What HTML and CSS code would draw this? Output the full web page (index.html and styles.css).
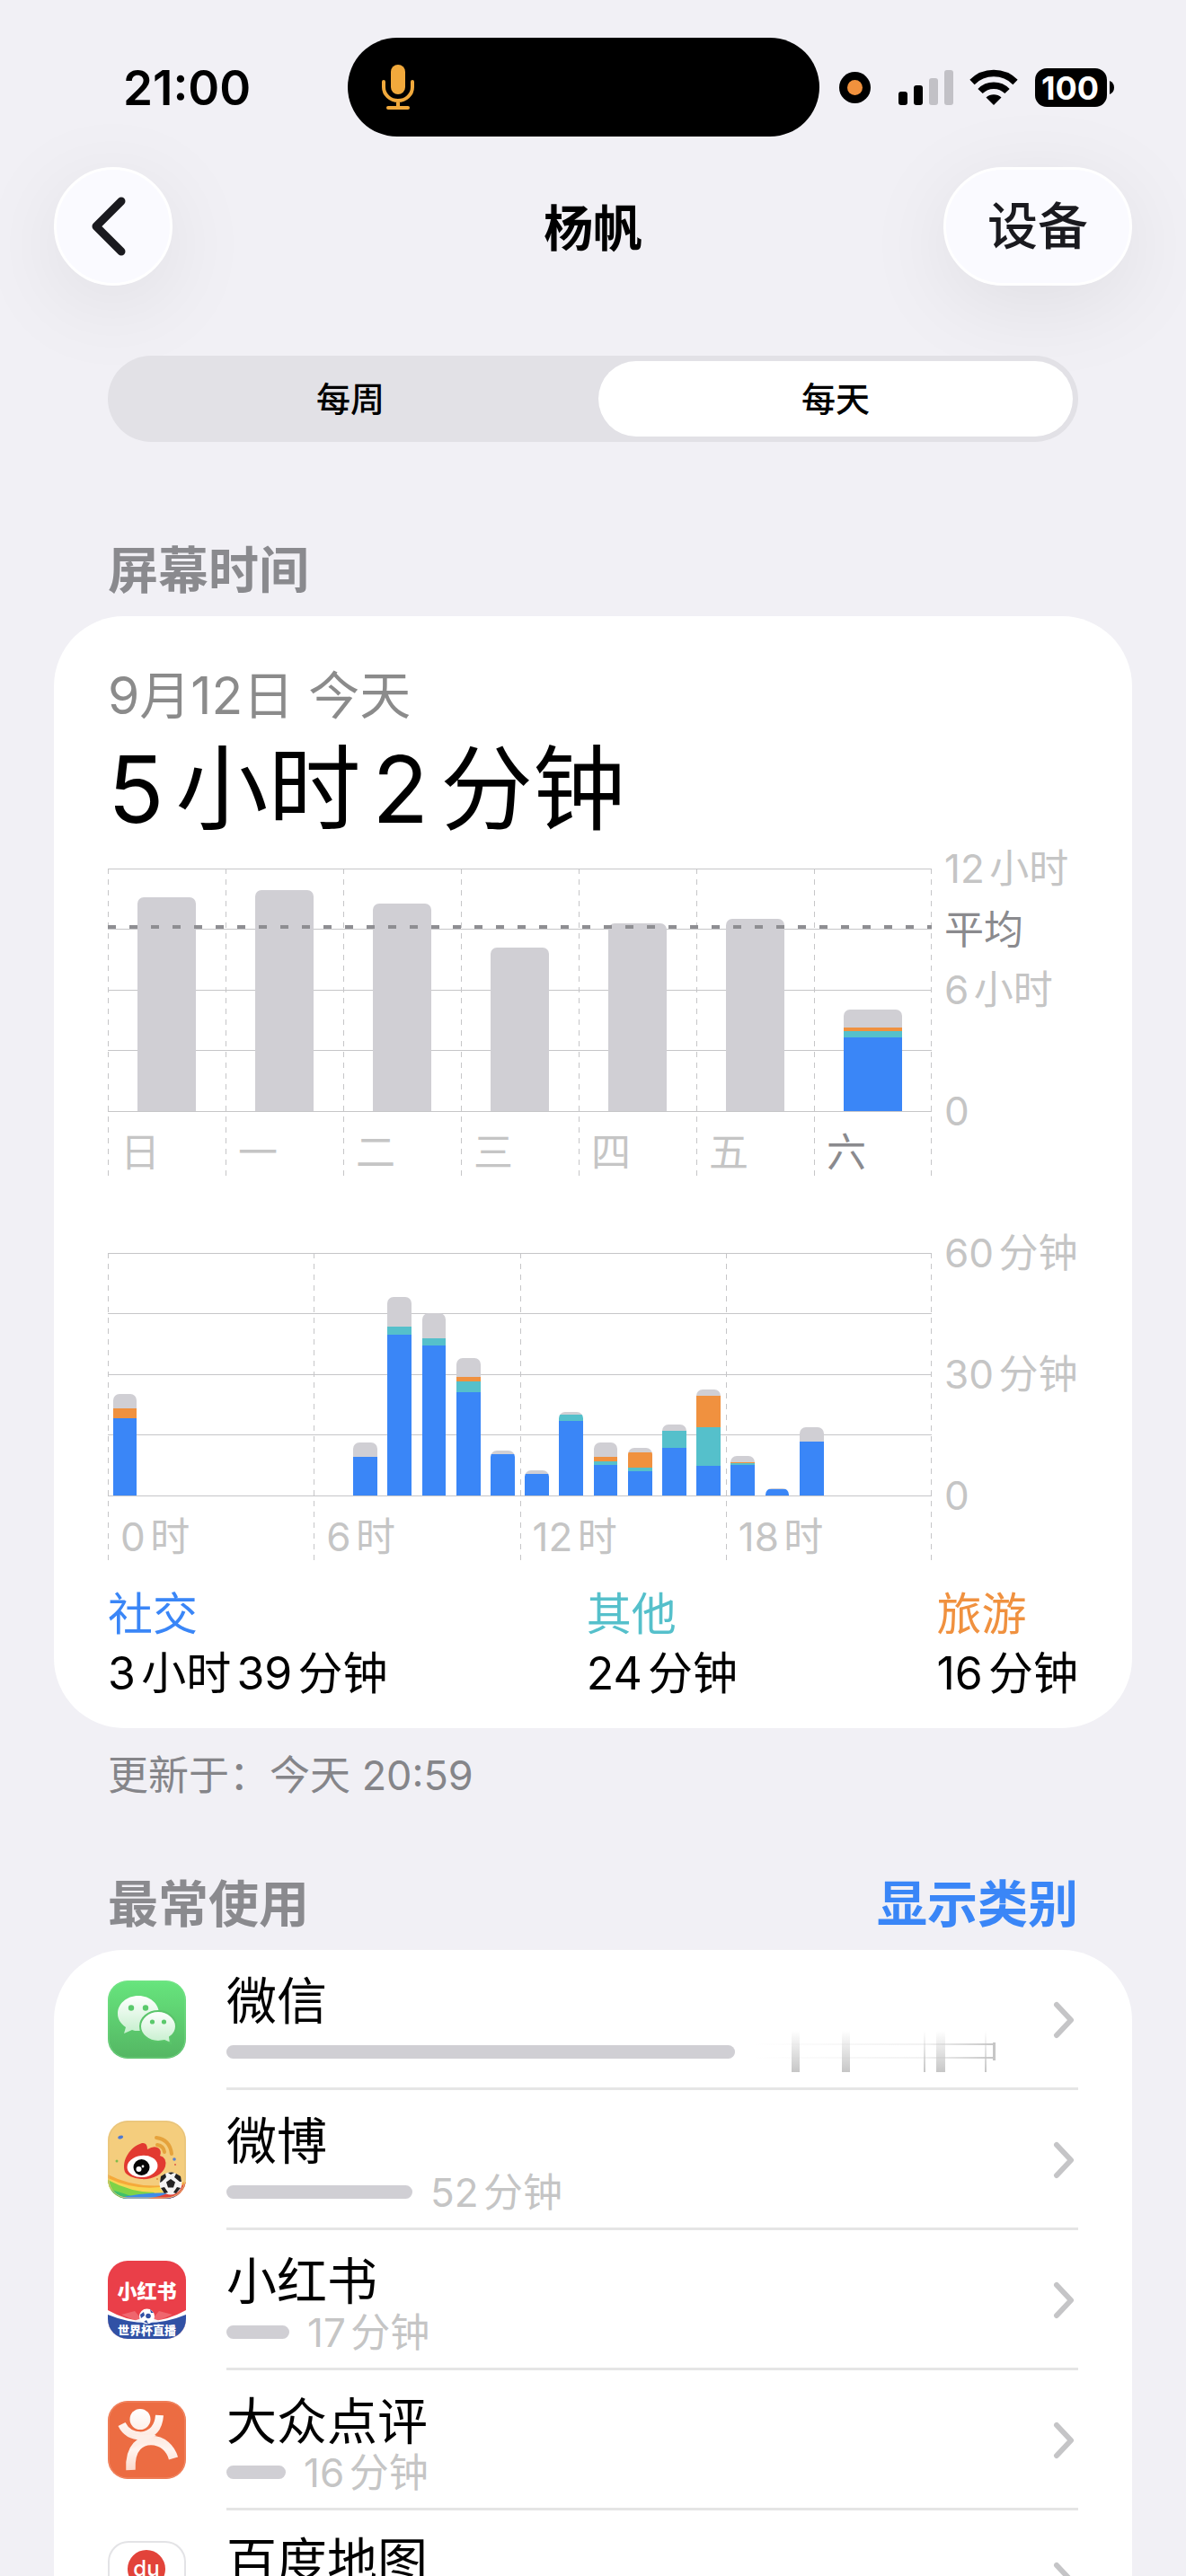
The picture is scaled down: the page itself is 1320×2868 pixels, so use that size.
FILE: index.html
```html
<!DOCTYPE html>
<html lang="zh-CN">
<head>
<meta charset="utf-8">
<meta name="viewport" content="width=device-width, initial-scale=1">
<title>屏幕时间</title>
<link rel="stylesheet" href="styles.css">
</head>
<body>
<div class="app">
  <div class="status">
    <div class="status-time">21:00</div>
    <div class="island">
      <svg width="36" height="50" viewBox="0 0 36 50" aria-hidden="true"><rect x="10" y="0" width="16" height="33" rx="8" fill="#f1a93c"/><path d="M2 19v6a16 15 0 0 0 32 0v-6M18 40v8M7 48h22" fill="none" stroke="#f1a93c" stroke-width="4" stroke-linecap="round"/></svg>
    </div>
    <div class="status-icons">
      <svg width="35" height="35" viewBox="0 0 35 35" aria-hidden="true"><circle cx="17.500" cy="17.500" r="17.500"/><circle cx="17.500" cy="17.500" r="8.500" fill="#f0913d"/></svg>
      <svg class="signal" width="61" height="39" viewBox="0 0 61 39" aria-hidden="true"><rect y="24" width="10" height="15" rx="3"/><rect x="17" y="17" width="10" height="22" rx="3"/><g fill="#c2c1c6"><rect x="34" y="9" width="10" height="30" rx="3"/><rect x="51" width="10" height="39" rx="3"/></g></svg>
      <svg class="wifi" width="54" height="40" viewBox="0 0 54 40" aria-hidden="true"><path d="M3 14.500a34 34 0 0 1 48 0M12 24.500a21 21 0 0 1 30 0" fill="none" stroke="#000" stroke-width="7.500"/><path d="M18.500 31.500a13 13 0 0 1 17 0L27 40z"/></svg>
      <svg class="battery" width="89" height="43" viewBox="0 0 89 43" role="img" aria-label="电量 100"><rect width="80" height="43" rx="13"/><path d="M83 14q5 2 5 7.500t-5 7.500z"/><text x="39" y="35" text-anchor="middle">100</text></svg>
    </div>
  </div>

  <header class="nav">
    <button class="glass back" aria-label="返回"><svg width="40" height="66" viewBox="0 0 40 66" aria-hidden="true"><path d="M34 5 6 33 34 61" fill="none" stroke="#1a1a1f" stroke-width="9" stroke-linecap="round" stroke-linejoin="round"/></svg></button>
    <h1>杨帆</h1>
    <button class="glass devices">设备</button>
  </header>

  <div class="segmented" role="radiogroup" aria-label="时间范围">
    <input type="radio" name="range" id="weekly"><label for="weekly">每周</label>
    <input type="radio" name="range" id="daily" checked><label for="daily">每天</label>
  </div>

  <main>
    <div class="section-head first"><h2>屏幕时间</h2></div>
    <section class="card summary">
      <p class="date">9月12日 今天</p>
      <p class="total">5小时2分钟</p>

      <div class="chart week">
        <div class="plot">
          <div class="span"><div class="bars"><div class="stack"><i class="rest" style="height:238px"></i></div></div><span class="tick">日</span></div>
          <div class="span"><div class="bars"><div class="stack"><i class="rest" style="height:246px"></i></div></div><span class="tick">一</span></div>
          <div class="span"><div class="bars"><div class="stack"><i class="rest" style="height:231px"></i></div></div><span class="tick">二</span></div>
          <div class="span"><div class="bars"><div class="stack"><i class="rest" style="height:182px"></i></div></div><span class="tick">三</span></div>
          <div class="span"><div class="bars"><div class="stack"><i class="rest" style="height:209px"></i></div></div><span class="tick">四</span></div>
          <div class="span"><div class="bars"><div class="stack"><i class="rest" style="height:214px"></i></div></div><span class="tick">五</span></div>
          <div class="span"><div class="bars"><div class="stack"><i class="rest" style="height:20px"></i><i class="travel" style="height:4px"></i><i class="other" style="height:7px"></i><i class="social" style="height:82px"></i></div></div><span class="tick today">六</span></div>
        </div>
        <div class="axis"><span class="row-1">12小时</span><span class="row-2 average">平均</span><span class="row-3">6小时</span><span class="row-5">0</span></div>
      </div>

      <div class="chart day">
        <div class="plot">
          <div class="span"><div class="bars">
            <div class="stack"><i class="rest" style="height:16px"></i><i class="travel" style="height:11px"></i><i class="social" style="height:86px"></i></div>
          </div><span class="tick">0时</span></div>
          <div class="span"><div class="bars">
            <div class="stack"></div>
            <div class="stack"><i class="rest" style="height:16px"></i><i class="social" style="height:43px"></i></div>
            <div class="stack"><i class="rest" style="height:33px"></i><i class="other" style="height:9px"></i><i class="social" style="height:179px"></i></div>
            <div class="stack"><i class="rest" style="height:28px"></i><i class="other" style="height:8px"></i><i class="social" style="height:167px"></i></div>
            <div class="stack"><i class="rest" style="height:21px"></i><i class="travel" style="height:5px"></i><i class="other" style="height:12px"></i><i class="social" style="height:115px"></i></div>
            <div class="stack"><i class="rest" style="height:4px"></i><i class="social" style="height:46px"></i></div>
          </div><span class="tick">6时</span></div>
          <div class="span"><div class="bars">
            <div class="stack"><i class="rest" style="height:4px"></i><i class="social" style="height:24px"></i></div>
            <div class="stack"><i class="rest" style="height:3px"></i><i class="other" style="height:7px"></i><i class="social" style="height:83px"></i></div>
            <div class="stack"><i class="rest" style="height:16px"></i><i class="travel" style="height:5px"></i><i class="other" style="height:4px"></i><i class="social" style="height:34px"></i></div>
            <div class="stack"><i class="rest" style="height:5px"></i><i class="travel" style="height:17px"></i><i class="other" style="height:4px"></i><i class="social" style="height:27px"></i></div>
            <div class="stack"><i class="rest" style="height:7px"></i><i class="other" style="height:19px"></i><i class="social" style="height:53px"></i></div>
            <div class="stack"><i class="rest" style="height:7px"></i><i class="travel" style="height:35px"></i><i class="other" style="height:43px"></i><i class="social" style="height:33px"></i></div>
          </div><span class="tick">12时</span></div>
          <div class="span"><div class="bars">
            <div class="stack"><i class="rest" style="height:7px"></i><i class="travel" style="height:1px"></i><i class="other" style="height:2px"></i><i class="social" style="height:34px"></i></div>
            <div class="stack"><i class="rest" style="height:1px"></i><i class="social" style="height:7px"></i></div>
            <div class="stack"><i class="rest" style="height:16px"></i><i class="social" style="height:60px"></i></div>
          </div><span class="tick">18时</span></div>
        </div>
        <div class="axis"><span class="row-1">60分钟</span><span class="row-3">30分钟</span><span class="row-5">0</span></div>
      </div>

      <dl class="legend">
        <div><dt class="c-social">社交</dt><dd>3小时39分钟</dd></div>
        <div><dt class="c-other">其他</dt><dd>24分钟</dd></div>
        <div><dt class="c-travel">旅游</dt><dd>16分钟</dd></div>
      </dl>
    </section>
    <p class="updated">更新于：今天 20:59</p>

    <div class="section-head"><h2>最常使用</h2><button class="text-button">显示类别</button></div>
    <section class="card apps">
      <a class="app-row" href="#wechat">
        <svg class="app-icon" viewBox="0 0 87 87" aria-hidden="true">
          <defs><linearGradient id="wx" x2="0" y2="1"><stop stop-color="#67e57d"/><stop offset="1" stop-color="#54b663"/></linearGradient><linearGradient id="wb" x2="0" y2="1"><stop stop-color="#fff"/><stop offset="1" stop-color="#c5efcd"/></linearGradient></defs>
          <rect width="87" height="87" rx="22" fill="url(#wx)"/><rect x="1" y="1" width="85" height="85" rx="21" fill="none" stroke="#7fe391" stroke-opacity=".6"/>
          <path d="M34 17c13 0 23 9 23 20S47 56 34 56c-3 0-5 0-7-1l-9 4 2-7c-6-4-9-9-9-15 0-11 10-20 23-20z" fill="url(#wb)"/><g fill="#5bc96c"><circle cx="26" cy="30.500" r="3.200"/><circle cx="42" cy="30.500" r="3.200"/></g>
          <path d="M56 34c11 0 20 8 20 17 0 5-2 9-7 12l1 7-7-3-7 1c-11 0-20-8-20-17s9-17 20-17z" fill="url(#wb)" stroke="#5bc56b" stroke-width="2"/><g fill="#5bc96c"><circle cx="49.500" cy="46" r="2.600"/><circle cx="62.500" cy="46" r="2.600"/></g>
        </svg>
        <span class="app-body"><span class="app-name">微信</span><span class="usage"><span class="meter" style="width:566px"></span>
          <svg class="fading-time" width="280" height="46" viewBox="0 0 280 46" aria-hidden="true">
            <defs><linearGradient id="fv" x2="0" y2="1"><stop stop-color="#c6c6c6" stop-opacity="0"/><stop offset="1" stop-color="#c6c6c6"/></linearGradient><linearGradient id="fh" gradientUnits="userSpaceOnUse" x1="0" x2="272" y1="0" y2="0"><stop stop-color="#ccc" stop-opacity="0"/><stop offset=".7" stop-color="#ccc" stop-opacity=".25"/><stop offset="1" stop-color="#c4c4c4"/></linearGradient></defs>
            <path d="M43 0h9v46h-9zM99 0h9v46h-9zM190 0h2v46h-2zM204 0h10v46h-10zM258 0h2v46h-2z" fill="url(#fv)"/><path d="M0 14h270v2H0zM0 29h270v2H0z" fill="url(#fh)"/><path d="M267 13h3v20h-3z" fill="#c6c6c6"/>
          </svg></span></span>
        <svg class="chevron" width="24" height="42" viewBox="0 0 24 42" aria-hidden="true"><path d="M4 4 20 21 4 38"/></svg>
      </a>
      <a class="app-row" href="#weibo">
        <svg class="app-icon" viewBox="0 0 87 87" aria-hidden="true">
          <defs><clipPath id="ic"><rect width="87" height="87" rx="22"/></clipPath></defs>
          <g clip-path="url(#ic)"><rect width="87" height="87" fill="#f4cd7d"/>
          <path d="M0 60q38 20 87 8v19H0z" fill="#f5a93a"/><path d="M0 64q34 16 70 8l-8 15H0z" fill="#f7d654"/><path d="M0 66q26 14 52 14l-4 7H0z" fill="#7ed348"/><path d="M0 76q16 4 34 11H0z" fill="#3fc06b"/><path d="M10 87q30-9 77-6v6z" fill="#3f8be8"/><path d="M44 87q26-4 43-18v18z" fill="#e0453a"/><path d="M60 87q18-1 27-9v9z" fill="#2b4fc0"/></g>
          <path d="M54 19q15 2 17 18" fill="none" stroke="#e5a23c" stroke-width="4" stroke-linecap="round"/><path d="M55 27q7 1 8 8" fill="none" stroke="#e5a23c" stroke-width="4" stroke-linecap="round"/>
          <path d="M19 57C15 44 25 29 38 25q6-1 6 7 8-5 13-1 3 3 1 8 8 2 6 12C61 61 48 66 37 65 28 64 21 61 19 57z" fill="#e23a31"/><ellipse cx="38.500" cy="51" rx="17" ry="12" fill="#fff" transform="rotate(-6 38 51)"/><circle cx="37.500" cy="52" r="9" fill="#050505"/><circle cx="34.500" cy="54" r="3" fill="#fff"/><circle cx="39" cy="51" r="1.400" fill="#fff"/>
          <ellipse cx="14" cy="18.500" rx="3" ry="1.800" fill="#4f78d0" transform="rotate(-20 14 18)"/><circle cx="10" cy="45" r="1.500" fill="#7fbd4a"/><circle cx="74" cy="43" r="1.800" fill="#5a80cc"/><circle cx="75" cy="49" r="1" fill="#df5a48"/><circle cx="55" cy="65" r="1" fill="#df8a38"/>
          <circle cx="70" cy="70" r="12.500" fill="#f3f3f3"/><g fill="#222"><path d="m70 65 5 3.500-2 6h-6l-2-6zM59 62l5-3 1 4-5 5-2 1zM81 62l-5-3-2 4 6 5 2 0zM63 81l-4-6 4-1 4 6zM76 81l5-6-4-1-4 6zM67 58q4-1 7 0l-4 2z"/></g>
          <rect x="1" y="1" width="85" height="85" rx="21" fill="none" stroke="#e3c17d" stroke-width="1"/>
        </svg>
        <span class="app-body"><span class="app-name">微博</span><span class="usage"><span class="meter" style="width:207px"></span><span class="minutes">52分钟</span></span></span>
        <svg class="chevron" width="24" height="42" viewBox="0 0 24 42" aria-hidden="true"><path d="M4 4 20 21 4 38"/></svg>
      </a>
      <a class="app-row" href="#xiaohongshu">
        <svg class="app-icon" viewBox="0 0 87 87" aria-hidden="true">
          <g clip-path="url(#ic)"><rect width="87" height="87" fill="#ea3f49"/><path d="M15 60 43.500 72 30 56zM72 60 43.500 72 57 56z" fill="#f28087" opacity=".6"/><path d="M0 55q43.500 25 87 0v32H0z" fill="#fff"/><path d="M0 60q43.500 18 87 0v27H0z" fill="#3151a5"/><path d="M28 68q15-9 31 0z" fill="#f4f4f8"/></g>
          <circle cx="43.500" cy="62" r="8.500" fill="#fff"/><g fill="#3151a5"><circle cx="45" cy="61.500" r="2.800"/><path d="M36 60l4-3 1 4-4 3zM47 54l4 4-3 0zM40 68l3-2 2 4z"/></g>
          <text class="logo-name" x="43.500" y="42" text-anchor="middle">小红书</text><text class="logo-tag" x="43.500" y="82" text-anchor="middle">世界杯直播</text>
        </svg>
        <span class="app-body"><span class="app-name">小红书</span><span class="usage"><span class="meter" style="width:70px"></span><span class="minutes">17分钟</span></span></span>
        <svg class="chevron" width="24" height="42" viewBox="0 0 24 42" aria-hidden="true"><path d="M4 4 20 21 4 38"/></svg>
      </a>
      <a class="app-row" href="#dianping">
        <svg class="app-icon" viewBox="0 0 87 87" aria-hidden="true">
          <defs><linearGradient id="dp" gradientUnits="userSpaceOnUse" x1="0" x2="0" y1="10" y2="78"><stop stop-color="#fff"/><stop offset=".45" stop-color="#fde9e0"/><stop offset=".65" stop-color="#fff4ef"/><stop offset="1" stop-color="#fbd9cb"/></linearGradient></defs>
          <rect width="87" height="87" rx="22" fill="#ec6c42"/><rect x="1" y="1" width="85" height="85" rx="21" fill="none" stroke="#f39a7a" stroke-opacity=".7"/>
          <circle cx="36" cy="20.500" r="11.500" fill="url(#dp)"/><path d="M15.500 26Q22 39 37 39 56 37 57.500 16" fill="none" stroke="url(#dp)" stroke-width="9"/><path d="M25.500 77C24 50 38 44 48 44c13 0 22 9 25 20" fill="none" stroke="url(#dp)" stroke-width="10.500"/><path d="M26 38 34 43Q29 46 25 54L44 44 54 38z" fill="#fdeee7"/>
        </svg>
        <span class="app-body"><span class="app-name">大众点评</span><span class="usage"><span class="meter" style="width:66px"></span><span class="minutes">16分钟</span></span></span>
        <svg class="chevron" width="24" height="42" viewBox="0 0 24 42" aria-hidden="true"><path d="M4 4 20 21 4 38"/></svg>
      </a>
      <a class="app-row" href="#baidumap">
        <svg class="app-icon" viewBox="0 0 87 87" aria-hidden="true">
          <rect x="1" y="1" width="85" height="85" rx="22" fill="#fff" stroke="#e3e3e6" stroke-width="2"/><path d="M43 10a21 21 0 0 1 21 21c0 14-12 22-21 36C34 53 22 45 22 31a21 21 0 0 1 21-21z" fill="#e2433a"/><text class="logo-du" x="43" y="39" text-anchor="middle">du</text>
        </svg>
        <span class="app-body"><span class="app-name">百度地图</span><span class="usage"><span class="meter" style="width:40px"></span><span class="minutes">10分钟</span></span></span>
        <svg class="chevron" width="24" height="42" viewBox="0 0 24 42" aria-hidden="true"><path d="M4 4 20 21 4 38"/></svg>
      </a>
    </section>
  </main>
</div>
</body>
</html>
```
FILE: styles.css
```css
:root {
  --bg: #f1f0f5;
  --gray: #8a8a8e;
  --light: #c5c5c5;
  --line: #c6c6c8;
  --bar: #d0cfd4;
  --blue: #3a86f7;
  --teal: #55c0cb;
  --orange: #f0913f;
}
* { box-sizing: border-box; }
body, h1, h2, p, dl, dd { margin: 0; }
body {
  background: var(--bg);
  color: #000;
  font-family: Inter, "Noto Sans CJK SC", sans-serif;
  text-autospace: normal;
}
button { border: 0; padding: 0; background: none; font: inherit; }
a { color: inherit; text-decoration: none; }
svg { display: block; flex: none; }

.app { height: 100vh; overflow-y: auto; scrollbar-width: none; }

.status {
  display: grid;
  grid-template-columns: 387fr 525fr 408fr;
  padding-top: 42px;
}
.status-time { padding: 2px 0 0 137px; font-size: 53px; font-weight: 600; line-height: 108px; }
.island { display: flex; align-items: center; height: 110px; padding-left: 38px; border-radius: 55px; background: #000; }
.status-icons { display: flex; align-items: center; padding-left: 22px; }
.signal { margin-left: 31px; }
.wifi { margin-left: 18px; }
.battery { margin-left: 19px; }
.battery text { fill: #fff; font-size: 36px; font-weight: 700; }

.nav {
  display: grid;
  grid-template-columns: 1fr auto 1fr;
  align-items: center;
  margin-top: 34px;
  padding: 0 60px;
}
.nav h1 { padding-top: 4px; font-size: 55px; font-weight: 600; line-height: 68px; }
.glass {
  height: 132px;
  border: 3px solid #fff;
  border-radius: 66px;
  background: #fafaff;
  box-shadow: 0 20px 100px rgba(0, 0, 0, .08);
  color: #1a1a1f;
}
.back { display: flex; align-items: center; justify-content: center; width: 132px; padding-right: 10px; }
.devices { justify-self: end; width: 210px; font-size: 56px; font-weight: 500; line-height: 120px; }

.segmented {
  display: grid;
  grid-template-columns: 540fr 528fr;
  position: relative;
  margin: 78px 120px 0;
  padding: 6px;
  border-radius: 48px;
  background: #e2e1e6;
}
.segmented input { position: absolute; opacity: 0; pointer-events: none; }
.segmented label { border-radius: 42px; font-size: 38px; font-weight: 500; line-height: 84px; text-align: center; }
.segmented input:first-child + label { padding-right: 12px; }
.segmented input:checked + label { background: #fff; }

.section-head {
  display: flex;
  justify-content: space-between;
  margin: 84px 120px 17px;
  font-size: 56px;
  line-height: 68px;
}
.section-head.first { margin-top: 109px; }
.section-head h2 { color: var(--gray); font-size: 56px; font-weight: 600; }
.text-button { color: var(--blue); font-weight: 600; line-height: 68px; }

.card { margin: 0 60px; border-radius: 78px; background: #fff; }
.summary { padding: 54px 60px 25px; }
.date { color: #8b8b8b; font-size: 57px; line-height: 70px; text-autospace: no-autospace; }
.total { padding-top: 4px; font-size: 103px; line-height: 130px; }

.chart { display: grid; grid-template-columns: 917fr 163fr; }
.week { margin-top: 23px; }
.day { margin-top: 86px; }
.plot {
  display: grid;
  grid-template-columns: repeat(7, 1fr);
  position: relative;
  background:
    repeating-linear-gradient(var(--line) 0 6px, transparent 6px 12px) right top / 1px 100% no-repeat,
    linear-gradient(var(--line), var(--line)) 0 0 / 100% 1px no-repeat,
    linear-gradient(var(--line), var(--line)) 0 67px / 100% 1px no-repeat,
    linear-gradient(var(--line), var(--line)) 0 135px / 100% 1px no-repeat,
    linear-gradient(var(--line), var(--line)) 0 202px / 100% 1px no-repeat,
    linear-gradient(var(--line), var(--line)) 0 270px / 100% 1px no-repeat;
}
.day .plot { grid-template-columns: repeat(4, 1fr); }
.week .plot::after {
  content: "";
  position: absolute;
  inset: 63px 0 auto;
  height: 4px;
  background: repeating-linear-gradient(90deg, #8e8e92 0 9px, transparent 9px 24px);
}
.span { background: repeating-linear-gradient(var(--line) 0 6px, transparent 6px 12px) left top / 1px 100% no-repeat; }
.bars { display: grid; height: 270px; align-items: end; }
.day .bars { grid-template-columns: repeat(6, 1fr); }
.stack { width: 50%; margin-left: 25%; overflow: hidden; border-radius: 7px 7px 0 0; }
.day .stack { width: 70%; margin-left: 15%; }
.stack i { display: block; }
.rest { background: var(--bar); }
.travel { background: var(--orange); }
.other { background: var(--teal); }
.social { background: var(--blue); }
.tick { display: block; padding: 20px 0 0 14px; color: var(--light); font-size: 44px; line-height: 52px; }
.tick.today, .average { color: var(--gray); }
.axis {
  display: grid;
  grid-template-rows: repeat(5, 44px);
  align-content: space-between;
  height: 314px;
  margin-top: -22px;
  padding-left: 14px;
  color: var(--light);
  font-size: 44px;
  line-height: 44px;
  white-space: nowrap;
}
.row-1 { grid-row: 1; }
.row-2 { grid-row: 2; }
.row-3 { grid-row: 3; }
.row-5 { grid-row: 5; }

.legend { display: flex; justify-content: space-between; margin-top: 30px; }
.legend dt { font-size: 50px; line-height: 60px; }
.legend dd { font-size: 50px; line-height: 72px; }
.c-social { color: var(--blue); }
.c-other { color: var(--teal); }
.c-travel { color: var(--orange); }
.updated { margin: 28px 120px 0; color: #858589; font-size: 45px; line-height: 50px; }

.app-row { display: flex; align-items: flex-start; padding: 0 60px; }
.app-icon { width: 87px; height: 87px; margin: 34px 45px 0 0; }
.app-body { flex: 1; height: 156px; padding-top: 23px; border-bottom: 3px solid #e5e5e5; }
.app-name { display: block; font-size: 56px; line-height: 68px; }
.usage { display: flex; align-items: center; gap: 20px; height: 44px; }
.meter { height: 15px; border-radius: 8px; background: var(--bar); }
.minutes { padding-top: 2px; color: var(--light); font-size: 44px; line-height: 44px; }
.chevron { margin: 57px 4px 0 -28px; }
.chevron path { fill: none; stroke: #c5c5c7; stroke-width: 6; stroke-linecap: round; stroke-linejoin: round; }
.logo-name { fill: #fff; font: 900 22px "Noto Sans CJK SC", sans-serif; }
.logo-tag { fill: #fff; font: 900 13px "Noto Sans CJK SC", sans-serif; }
.logo-du { fill: #fff; font: 500 24px Inter, sans-serif; }
```
